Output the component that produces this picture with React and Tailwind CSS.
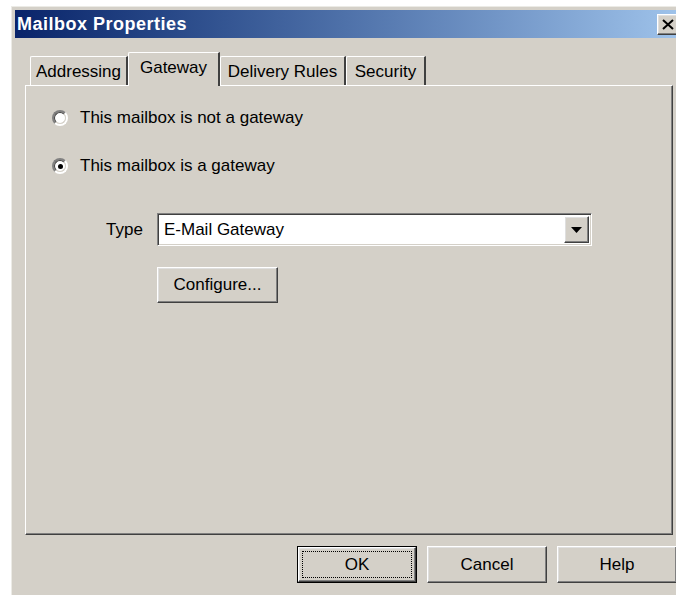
const raised =
  "border border-t-white border-l-white border-r-[#404040] border-b-[#404040] shadow-[inset_-1px_-1px_0_#808080,inset_1px_1px_0_#dfdfdf]";
const sunken =
  "border border-t-[#808080] border-l-[#808080] border-r-white border-b-white shadow-[inset_1px_1px_0_#404040,inset_-1px_-1px_0_#d4d0c8]";

// classic two-tone radio: shadow ring on the upper left, highlight on the lower right
function Radio({ checked }) {
  return (
    <div className="w-[16px] h-[16px] shrink-0 rounded-full border-2 border-t-[#808080] border-l-[#808080] border-r-white border-b-white">
      <div className="w-full h-full rounded-full bg-white border border-t-[#404040] border-l-[#404040] border-r-[#d4d0c8] border-b-[#d4d0c8] flex items-center justify-center">
        {checked && <div className="w-[5px] h-[5px] rounded-full bg-black" />}
      </div>
    </div>
  );
}

function Tab({ label, active, width }) {
  return (
    <div
      className={`flex items-center justify-center border-l border-t border-white border-r-2 border-r-[#404040] rounded-tl-[2px] bg-[#d4d0c8] ${
        active ? "h-[34px] -mb-[1px] relative z-10 pb-[4px]" : "h-[29px] pt-[2px]"
      }`}
      style={{ width }}
    >
      {label}
    </div>
  );
}

function Button({ children, isDefault }) {
  if (isDefault) {
    return (
      <div className="w-[120px] h-[37px] border border-black">
        <div className={`h-full ${raised} flex items-center justify-center p-[3px]`}>
          <div className="w-full h-full border border-dotted border-black flex items-center justify-center">
            {children}
          </div>
        </div>
      </div>
    );
  }
  return (
    <div className={`w-[120px] h-[37px] ${raised} flex items-center justify-center`}>
      {children}
    </div>
  );
}

export default function App() {
  return (
    <div
      className="w-[676px] h-[595px] bg-white overflow-hidden pt-[6px] pl-[11px] text-[17px] text-black"
      style={{ fontFamily: '"Liberation Sans", Arial, sans-serif' }}
    >
      <div className="w-[700px] h-[620px] bg-[#d4d0c8] border-l border-t border-[#ecebe6] pl-[3px] pt-[3px] flex flex-col">
        {/* title bar */}
        <div className="h-[28px] w-[693px] bg-gradient-to-r from-[#0a246a] to-[#a6caf0] flex items-center">
          <span className="pl-[2px] text-white font-bold text-[18px] tracking-[0.5px] flex-1">
            Mailbox Properties
          </span>
          <div className={`w-[22px] h-[21px] mr-[29px] ${raised} bg-[#d4d0c8] flex items-center justify-center`}>
            <svg width="12" height="11" viewBox="0 0 12 11">
              <path d="M1 1 L11 10 M11 1 L1 10" stroke="#000" strokeWidth="2" />
            </svg>
          </div>
        </div>

        {/* tab strip */}
        <div className="mt-[14px] ml-[10px] pl-[5px] h-[33px] flex items-end">
          <Tab label="Addressing" width={98} />
          <Tab label="Gateway" width={92} active />
          <Tab label="Delivery Rules" width={126} />
          <Tab label="Security" width={80} />
        </div>

        {/* tab page */}
        <div className="ml-[10px] w-[648px] h-[450px] border-l border-t border-white border-r border-b border-r-[#404040] border-b-[#404040] shadow-[inset_-1px_-1px_0_#808080] flex flex-col">
          <label className="mt-[22px] ml-[26px] flex items-center gap-[12px] h-[20px]">
            <Radio />
            <span>This mailbox is not a gateway</span>
          </label>
          <label className="mt-[28px] ml-[26px] flex items-center gap-[12px] h-[20px]">
            <Radio checked />
            <span>This mailbox is a gateway</span>
          </label>

          <div className="mt-[37px] ml-[80px] flex items-center">
            <span className="w-[51px]">Type</span>
            <div className={`w-[435px] h-[33px] bg-white ${sunken} flex items-center p-[2px]`}>
              <span className="flex-1 pl-[4px]">E-Mail Gateway</span>
              <div className={`w-[25px] h-full bg-[#d4d0c8] ${raised} flex items-center justify-center`}>
                <svg width="11" height="6" viewBox="0 0 11 6">
                  <path d="M0 0 H11 L5.5 6 Z" fill="#000" />
                </svg>
              </div>
            </div>
          </div>

          <div className="mt-[21px] ml-[131px]">
            <div className={`w-[121px] h-[36px] ${raised} flex items-center justify-center`}>
              Configure...
            </div>
          </div>
        </div>

        {/* dialog buttons */}
        <div className="mt-[11px] ml-[282px] flex gap-[10px]">
          <Button isDefault>OK</Button>
          <Button>Cancel</Button>
          <Button>Help</Button>
        </div>
      </div>
    </div>
  );
}
